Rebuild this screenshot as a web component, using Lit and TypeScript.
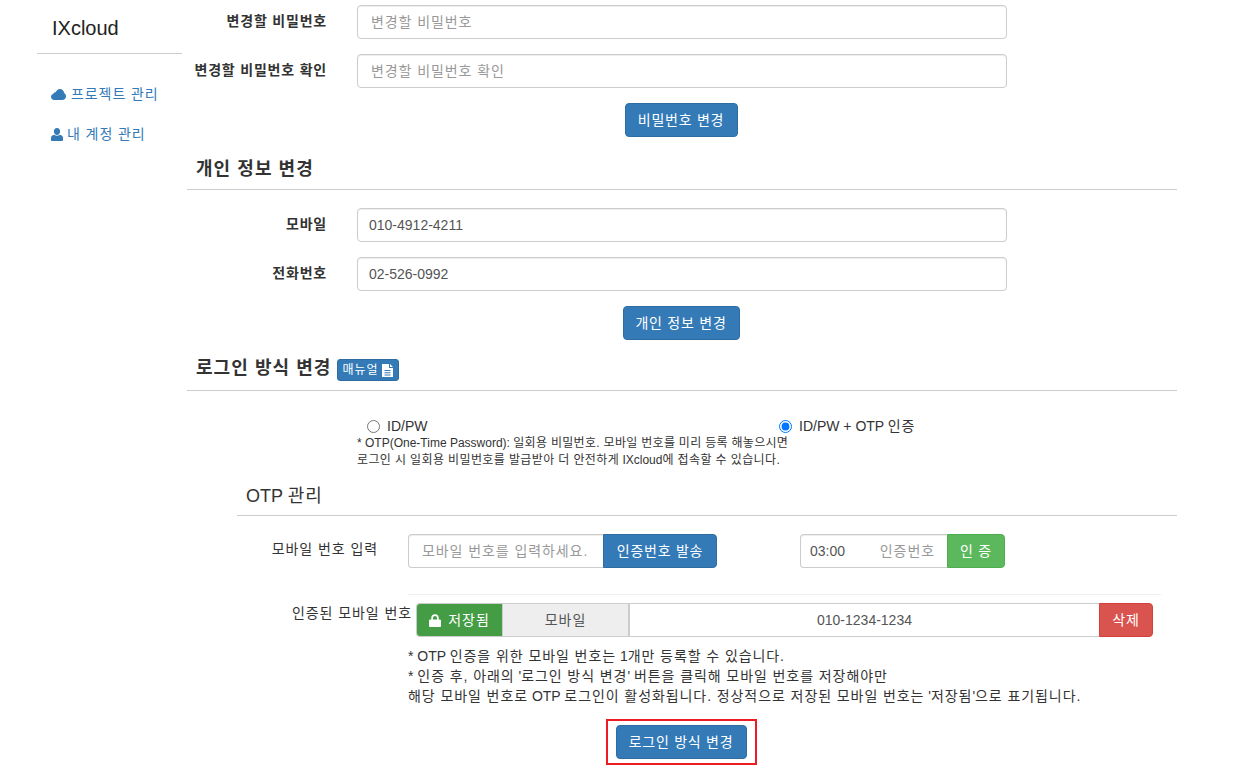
import { LitElement, html, css } from "lit";
import { customElement } from "lit/decorators.js";

const cloud = html`<svg class="ic" width="15" height="11" viewBox="0 0 15 11"><path fill="currentColor" d="M3.300 11C1.400 11 0 9.600 0 7.800c0-1.500 1-2.700 2.400-3.100C2.700 3.700 3.600 3.100 4.700 3.200 5.400 1.300 7 0 8.900 0c2.300 0 4.100 1.800 4.200 4 1.100.6 1.900 1.800 1.900 3.200C15 9.300 13.400 11 11.300 11z"/></svg>`;
const user = html`<svg class="ic" width="12" height="13" viewBox="0 0 12 13"><path fill="currentColor" d="M6 0c1.900 0 3.100 1.400 3.100 3.300S8 7 6 7 2.900 5.200 2.900 3.300 4.100 0 6 0zM3.300 6.700C4 7.400 4.900 7.800 6 7.800s2-.4 2.700-1.100c2 .4 3.300 1.400 3.300 3.100V12c0 .6-.4 1-1 1H1c-.6 0-1-.4-1-1V9.800c0-1.700 1.300-2.700 3.300-3.100z"/></svg>`;
const file = html`<svg class="ic" width="11" height="13" viewBox="0 0 11 13"><path fill="currentColor" fill-rule="evenodd" d="M0 0h7v4h4v9H0zM8 0l3 3H8zM2.500 6v1h6V6zM2.500 8.200v1h6v-1zM2.500 10.400v1h6v-1z"/></svg>`;
const lock = html`<svg class="ic" width="12" height="13" viewBox="0 0 12 13"><path fill="currentColor" fill-rule="evenodd" d="M2.300 5.500V4a3.700 3.700 0 0 1 7.400 0v1.500h.9c.6 0 1.400.5 1.400 1.100V12c0 .6-.5 1-1 1H1c-.5 0-1-.4-1-1V6.600C0 6 .8 5.500 1.400 5.500zM4 5.500h4V4a2 2 0 0 0-4 0z"/></svg>`;

@customElement("app-root")
export class AppRoot extends LitElement {
  static styles = css`
    :host { display: block; height: 767px; overflow: hidden; background: #fff; color: #333;
      font-family: "Liberation Sans", "Noto Sans CJK KR", sans-serif; font-size: 14px; line-height: 20px; }
    * { box-sizing: border-box; }
    .k { letter-spacing: 0.92px; }
    .lab .k { letter-spacing: 0.8px; }
    .btn .k { letter-spacing: 0.75px; }
    .h .k, .otp-h .k { letter-spacing: 1.05px; }
    .note .k { letter-spacing: 0.3px; }
    .note div + div .k { letter-spacing: 0.38px; }
    .page { display: flex; padding-left: 37px; height: 767px; }
    .side { width: 145px; flex: none; }
    .brand { height: 54px; padding: 17px 0 0 15px; font-size: 20px; line-height: 22px; color: #222; border-bottom: 1px solid #ccc; }
    .nav { padding: 30px 0 0 14px; display: flex; flex-direction: column; gap: 20px; color: #337ab7; }
    .nav div { height: 20px; display: flex; align-items: center; gap: 5px; }
    .nav div + div { gap: 4px; }
    .main { width: 990px; margin-left: 5px; padding-top: 5px; }
    .row { display: flex; margin-bottom: 15px; }
    .lab { width: 140px; text-align: right; font-weight: bold; line-height: 32px; height: 34px; white-space: nowrap; margin-right: 30px; flex: none; display: flex; justify-content: flex-end; }
    .input { border: 1px solid #ccc; border-radius: 4px; height: 34px; padding: 6px 12px 6px 11px; width: 650px; background: #fff; color: #555; white-space: nowrap; box-shadow: inset 0 1px 1px rgba(0,0,0,.075); }
    .ph { color: #999; }
    .input.ph { padding-left: 13px; }
    .c { width: 650px; margin-left: 169px; display: flex; justify-content: center; }
    .btn { display: inline-flex; align-items: center; justify-content: center; height: 34px; padding: 0; border-radius: 4px; border: 1px solid #2e6da4; background: #337ab7; color: #fff; white-space: nowrap; }
    .w113 { width: 113px; }
    .w117 { width: 117px; }
    .w131 { width: 131px; }
    .h { display: flex; align-items: flex-start; padding-left: 9px; border-bottom: 1px solid #ccc; font-size: 18px; line-height: 22px; font-weight: bold; }
    .h1 { height: 53px; padding-top: 21px; margin-bottom: 18px; }
    .h2 { height: 51px; padding-top: 17px; gap: 6px; }
    .xs { height: 22px; margin-top: 2px; padding: 0 5px 0 4px; font-size: 12px; font-weight: normal; border-radius: 3px; gap: 3px; line-height: 18px; }
    .radios { display: flex; padding-left: 170px; margin-top: 25px; }
    .radios label { display: flex; align-items: center; height: 20px; gap: 7px; color: #333; }
    .radios label:first-child { width: 422px; padding-left: 10px; }
    .radios input { margin: 0; width: 13px; height: 13px; accent-color: #0075ff; }
    .note { margin: -1px 0 0 170px; font-size: 12px; line-height: 17px; }
    .otp { margin-left: 50px; }
    .otp-h { font-size: 18px; padding-left: 9px; border-bottom: 1px solid #ccc; margin: 17px 0 18px; height: 30px; line-height: 20px; font-weight: normal; }
    .verify { display: flex; height: 34px; }
    .verify .vl { width: 141px; line-height: 30px; text-align: right; margin-right: 30px; white-space: nowrap; flex: none; }
    .ig { display: flex; width: 309px; }
    .ig .input { flex: 1; width: auto; border-right: 0; border-radius: 4px 0 0 4px; padding: 6px 13px; overflow: hidden; }
    .ig .btn { border-radius: 0 4px 4px 0; padding: 0; width: 114px; }
    .ig2 { width: 205px; margin-left: 83px; }
    .ig .input.split { display: flex; justify-content: space-between; padding: 6px 12px 6px 9px; }
    .ig2 .btn { width: 58px; background: #5cb85c; border-color: #4cae4c; }
    .sep { margin: 26px 16px 8px 171px; border-top: 1px solid #eee; height: 1px; }
    .saved { display: flex; height: 34px; }
    .saved .vl { width: 175px; line-height: 20px; text-align: right; margin-right: 4px; white-space: nowrap; flex: none; }
    .sg { display: flex; width: 737px; }
    .sg > div { height: 34px; display: flex; align-items: center; justify-content: center; border-top: 1px solid #ccc; border-bottom: 1px solid #ccc; }
    .st { width: 87px; background: #449d44; color: #fff; border: 1px solid #ccc; border-radius: 4px 0 0 4px; gap: 7px; }
    .ty { width: 127px; background: #eee; color: #555; border-right: 2px solid #ccc; }
    .num { flex: 1; color: #555; }
    .sg .del { width: 54px; background: #d9534f; color: #fff; border: 1px solid #d43f3a; border-radius: 0 4px 4px 0; }
    .notes { margin: 9px 0 0 171px; }
    .foot { display: flex; justify-content: center; margin: 13px 0 0 -51px; width: 990px; }
    .hl { display: inline-flex; border: 2px solid #ed1c24; padding: 4px 8px; }
    .ic { flex: none; display: block; }
  `;
  render() {
    const k = (s: string) => html`<span class="k">${s}</span>`;
    return html`<div class="page">
      <aside class="side">
        <div class="brand">IXcloud</div>
        <nav class="nav">
          <div>${cloud}${k("프로젝트 관리")}</div>
          <div>${user}${k("내 계정 관리")}</div>
        </nav>
      </aside>
      <main class="main">
        <div class="row"><div class="lab">${k("변경할 비밀번호")}</div><div class="input ph">${k("변경할 비밀번호")}</div></div>
        <div class="row"><div class="lab">${k("변경할 비밀번호 확인")}</div><div class="input ph">${k("변경할 비밀번호 확인")}</div></div>
        <div class="c"><span class="btn w113">${k("비밀번호 변경")}</span></div>
        <div class="h h1">${k("개인 정보 변경")}</div>
        <div class="row"><div class="lab">${k("모바일")}</div><div class="input">010-4912-4211</div></div>
        <div class="row"><div class="lab">${k("전화번호")}</div><div class="input">02-526-0992</div></div>
        <div class="c"><span class="btn w117">${k("개인 정보 변경")}</span></div>
        <div class="h h2">${k("로그인 방식 변경")}<span class="btn xs">${k("매뉴얼")}${file}</span></div>
        <div class="radios">
          <label><input type="radio" name="m" />ID/PW</label>
          <label><input type="radio" name="m" checked /><span>ID/PW + OTP ${k("인증")}</span></label>
        </div>
        <div class="note">
          <div>* OTP(One-Time Password): ${k("일회용 비밀번호. 모바일 번호를 미리 등록 해놓으시면")}</div>
          <div>${k("로그인 시 일회용 비밀번호를 발급받아 더 안전하게")} IXcloud${k("에 접속할 수 있습니다.")}</div>
        </div>
        <section class="otp">
          <div class="otp-h">OTP ${k("관리")}</div>
          <div class="verify">
            <div class="vl">${k("모바일 번호 입력")}</div>
            <div class="ig"><div class="input ph">${k("모바일 번호를 입력하세요.")}</div><span class="btn">${k("인증번호 발송")}</span></div>
            <div class="ig ig2"><div class="input split"><span>03:00</span><span class="ph">${k("인증번호")}</span></div><span class="btn">${k("인 증")}</span></div>
          </div>
          <div class="sep"></div>
          <div class="saved">
            <div class="vl">${k("인증된 모바일 번호")}</div>
            <div class="sg">
              <div class="st">${lock}${k("저장됨")}</div>
              <div class="ty">${k("모바일")}</div>
              <div class="num">010-1234-1234</div>
              <div class="del">${k("삭제")}</div>
            </div>
          </div>
          <div class="notes">
            <div>* OTP ${k("인증을 위한 모바일 번호는")} 1${k("개만 등록할 수 있습니다.")}</div>
            <div>* ${k("인증 후, 아래의")} '${k("로그인 방식 변경")}' ${k("버튼을 클릭해 모바일 번호를 저장해야만")}</div>
            <div>${k("해당 모바일 번호로")} OTP ${k("로그인이 활성화됩니다. 정상적으로 저장된 모바일 번호는")} '${k("저장됨")}'${k("으로 표기됩니다.")}</div>
          </div>
          <div class="foot"><div class="hl"><span class="btn w131">${k("로그인 방식 변경")}</span></div></div>
        </section>
      </main>
    </div>`;
  }
}
